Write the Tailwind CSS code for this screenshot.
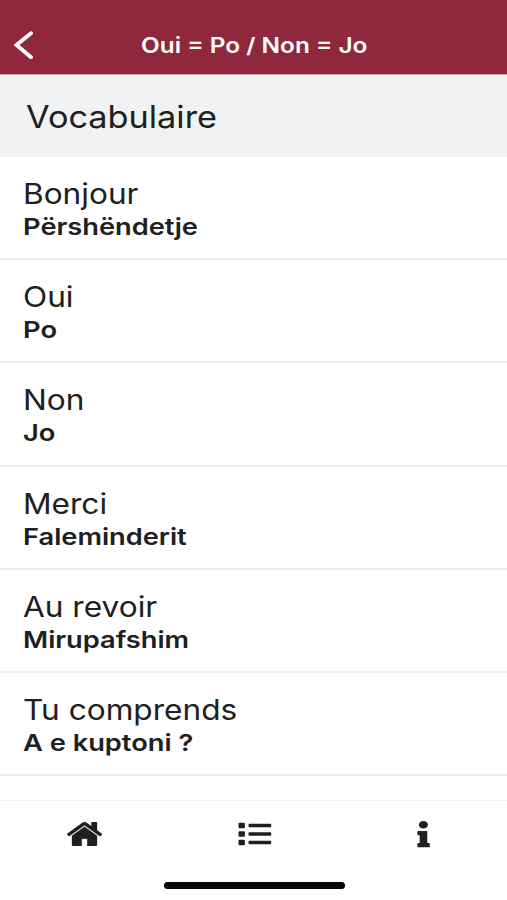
<!DOCTYPE html>
<html lang="fr"><head><meta charset="utf-8"><title>Vocabulaire</title>
<script src="https://cdn.jsdelivr.net/npm/@tailwindcss/browser@4"></script></head>
<body class="bg-white font-['Inter',sans-serif] text-[#202020]">
<div class="w-[507px] h-[900px] flex flex-col overflow-hidden">
<header class="h-[75px] shrink-0 bg-[#8f283d] text-white flex items-center pt-[15px] border-b border-[#d6aab3]">
<svg class="w-5 h-7 ml-[13px]" viewBox="0 0 20 28" fill="none" stroke="currentColor" stroke-width="3.8" stroke-linecap="round" stroke-linejoin="miter"><path d="M18 2.2 3.5 14 18 26.2"/></svg>
<h1 class="ml-[108px] whitespace-nowrap font-semibold text-[21px] leading-[30px] origin-left scale-x-[1.16] pt-[3px]">Oui = Po / Non = Jo</h1>
</header>
<h2 class="h-[82px] shrink-0 bg-[#f1f2f4] flex items-center text-[31px]"><span class="ml-[26px] pt-[2px] origin-left scale-x-[1.105]">Vocabulaire</span></h2>
<main class="flex-1 min-h-0 overflow-hidden">
<div class="h-[103.2px] border-b-2 border-[#ededed] pl-[23px] pt-[20px]"><p class="text-[28.4px] leading-[34px] origin-left scale-x-[1.113]">Bonjour</p><p class="text-[23.4px] leading-[31px] font-semibold origin-left scale-x-[1.165]">Përshëndetje</p></div>
<div class="h-[103.2px] border-b-2 border-[#ededed] pl-[23px] pt-[20px]"><p class="text-[28.4px] leading-[34px] origin-left scale-x-[1.113]">Oui</p><p class="text-[23.4px] leading-[31px] font-semibold origin-left scale-x-[1.165]">Po</p></div>
<div class="h-[103.2px] border-b-2 border-[#ededed] pl-[23px] pt-[20px]"><p class="text-[28.4px] leading-[34px] origin-left scale-x-[1.113]">Non</p><p class="text-[23.4px] leading-[31px] font-semibold origin-left scale-x-[1.165]">Jo</p></div>
<div class="h-[103.2px] border-b-2 border-[#ededed] pl-[23px] pt-[20px]"><p class="text-[28.4px] leading-[34px] origin-left scale-x-[1.113]">Merci</p><p class="text-[23.4px] leading-[31px] font-semibold origin-left scale-x-[1.165]">Faleminderit</p></div>
<div class="h-[103.2px] border-b-2 border-[#ededed] pl-[23px] pt-[20px]"><p class="text-[28.4px] leading-[34px] origin-left scale-x-[1.113]">Au revoir</p><p class="text-[23.4px] leading-[31px] font-semibold origin-left scale-x-[1.165]">Mirupafshim</p></div>
<div class="h-[103.2px] border-b-2 border-[#ededed] pl-[23px] pt-[20px]"><p class="text-[28.4px] leading-[34px] origin-left scale-x-[1.113]">Tu comprends</p><p class="text-[23.4px] leading-[31px] font-semibold origin-left scale-x-[1.165]">A e kuptoni ?</p></div>
</main>
<footer class="h-[100px] shrink-0 border-t border-[#f0f0f0] flex flex-col items-center">
<nav class="w-full grid grid-cols-3 justify-items-center items-center h-[66px] text-[#1d1f20]">
<svg class="w-[35px] h-6" viewBox="26 253 1612 1283" preserveAspectRatio="none" fill="currentColor" stroke="currentColor" stroke-width="16"><path d="M1408 992v480q0 26-19 45t-45 19h-384v-384h-256v384h-384q-26 0-45-19t-19-45v-480q0-1 .5-3t.5-3l575-474 575 474q1 2 1 6zm223-69l-62 74q-8 9-21 11h-3q-13 0-21-7l-692-577-692 577q-12 8-24 7-13-2-21-11l-62-74q-8-10-7-23.5t11-21.5l719-599q32-26 76-26t76 26l244 204v-195q0-14 9-23t23-9h192q14 0 23 9t9 23v408l219 182q10 8 11 21.5t-7 23.5z"/></svg>
<svg class="w-[34px] h-6 ml-[2px]" viewBox="0 0 34 24" fill="currentColor"><rect x=".5" y=".8" width="6.4" height="5.4" rx="1"/><rect x=".5" y="9.3" width="6.4" height="5.4" rx="1"/><rect x=".5" y="17.8" width="6.4" height="5.4" rx="1"/><rect x="10.5" y="1.7" width="22.7" height="3.6" rx="1"/><rect x="10.5" y="10.2" width="22.7" height="3.6" rx="1"/><rect x="10.5" y="18.7" width="22.7" height="3.6" rx="1"/></svg>
<svg class="w-[13px] h-[27px] ml-px" viewBox="0 0 13 27" fill="currentColor"><ellipse cx="6.4" cy="3.8" rx="4.5" ry="3.8"/><path d="M1.4 10h7.9q1 0 1 1v11.1h1.6q.9 0 .9.9v2.4q0 .9-.9.9H1.3q-.9 0-.9-.9V23q0-.9.9-.9h1.4v-7.9H1.4q-1 0-1-.9V11q0-1 1-1z"/></svg>
</nav>
<div class="ml-px mt-[15px] w-[181px] h-[7px] rounded-full bg-[#050808]"></div>
</footer>
</div></body></html>
